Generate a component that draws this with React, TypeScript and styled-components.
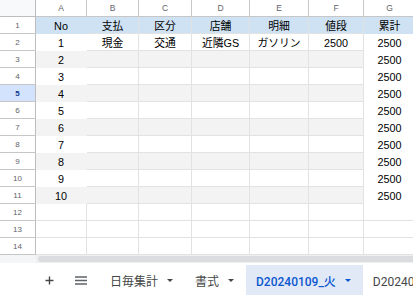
import styled, { createGlobalStyle } from "styled-components";

const GlobalStyle = createGlobalStyle`
  body {
    margin: 0;
    background: #ffffff;
  }
`;

const COLUMNS = ["A", "B", "C", "D", "E", "F", "G"];
const HEADERS = ["No", "支払", "区分", "店舗", "明細", "値段", "累計"];
const FIRST_ROW = ["1", "現金", "交通", "近隣GS", "ガソリン", "2500", "2500"];
const ACTIVE_ROW = 5;
const ROW_COUNT = 14;

type Fill = "none" | "header" | "band" | "white";

function buildRow(row: number): string[] {
  if (row === 1) return HEADERS;
  if (row === 2) return FIRST_ROW;
  if (row <= 11) return [String(row - 1), "", "", "", "", "", "2500"];
  return ["", "", "", "", "", "", ""];
}

function fillFor(row: number, col: number): Fill {
  if (row === 1) return "header";
  if (row > 11) return "none";
  if (col === 6) return "white";
  return row % 2 === 1 ? "band" : "white";
}

export default function App(): JSX.Element {
  const rows = Array.from({ length: ROW_COUNT }, (_, i) => i + 1);

  return (
    <Page>
      <GlobalStyle />
      <Sheet>
        <Corner />
        {COLUMNS.map((c) => (
          <ColHeader key={c}>{c}</ColHeader>
        ))}
        {rows.map((r) => (
          <Row key={r} row={r} />
        ))}
      </Sheet>
      <ScrollStrip>
        <ScrollCorner />
        <ScrollThumb />
      </ScrollStrip>
      <TabBar>
        <IconButton aria-label="シートを追加">
          <svg width="9" height="9" viewBox="0 0 9 9">
            <path d="M4.5 0.5v8M0.5 4.5h8" stroke="#444746" strokeWidth="1.4" />
          </svg>
        </IconButton>
        <IconButton aria-label="すべてのシート">
          <svg width="12" height="9" viewBox="0 0 12 9">
            <path d="M0 1h12M0 4.5h12M0 8h12" stroke="#5f6368" strokeWidth="1.5" />
          </svg>
        </IconButton>
        <Tab>
          日毎集計
          <Caret />
        </Tab>
        <Tab>
          書式
          <Caret />
        </Tab>
        <Tab $active>
          D20240109_火
          <Caret $active />
        </Tab>
        <Tab>D20240110_水</Tab>
      </TabBar>
    </Page>
  );
}

function Row({ row }: { row: number }): JSX.Element {
  const values = buildRow(row);
  return (
    <>
      <RowHeader $active={row === ACTIVE_ROW}>{row}</RowHeader>
      {values.map((v, col) => {
        const fill = fillFor(row, col);
        const plain = row <= 11 && (col === 0 || col === 6);
        return (
          <Cell key={col} $fill={fill} $plain={plain}>
            {v}
          </Cell>
        );
      })}
    </>
  );
}

const Page = styled.div`
  width: 413px;
  height: 295px;
  overflow: hidden;
  display: flex;
  flex-direction: column;
  font-family: "Liberation Sans", Arial, "Noto Sans CJK JP", sans-serif;
`;

const Sheet = styled.div`
  flex: none;
  display: grid;
  grid-template-columns: 36px 51px 52px 53px 58px 59px 55px 52px;
  grid-auto-rows: 17px;
  height: 255px;
  overflow: hidden;
`;

const Corner = styled.div`
  box-sizing: border-box;
  background: #f8f9fa;
  border-right: 1px solid #bdbdbd;
  border-bottom: 1px solid #bdbdbd;
`;

const ColHeader = styled.div`
  box-sizing: border-box;
  display: flex;
  align-items: center;
  justify-content: center;
  background: #ffffff;
  border-right: 1px solid #c7c7c7;
  border-bottom: 1px solid #c7c7c7;
  color: #5f6368;
  font-size: 8.5px;
`;

const RowHeader = styled.div<{ $active?: boolean }>`
  box-sizing: border-box;
  display: flex;
  align-items: center;
  justify-content: center;
  background: ${(p) => (p.$active ? "#d3e3fd" : "#ffffff")};
  border-right: 1px solid #bdbdbd;
  border-bottom: 1px solid #c7c7c7;
  color: ${(p) => (p.$active ? "#0b3a8c" : "#5f6368")};
  font-size: 8px;
  font-weight: ${(p) => (p.$active ? 700 : 400)};
`;

const FILLS: Record<Fill, string> = {
  none: "#ffffff",
  header: "#cfe2f3",
  band: "#f3f3f3",
  white: "#ffffff",
};

const Cell = styled.div<{ $fill: Fill; $plain: boolean }>`
  box-sizing: border-box;
  display: flex;
  align-items: flex-end;
  justify-content: center;
  padding-bottom: 0;
  background: ${(p) => FILLS[p.$fill]};
  border-right: 1px solid ${(p) => (p.$plain ? "transparent" : "#e2e2e3")};
  border-bottom: 1px solid ${(p) => (p.$plain ? "transparent" : "#e2e2e3")};
  color: #000000;
  font-size: 10.8px;
  line-height: 13px;
  white-space: nowrap;
  overflow: hidden;
`;

const ScrollStrip = styled.div`
  flex: none;
  display: flex;
  height: 8px;
  background: #eeeff1;
`;

const ScrollCorner = styled.div`
  width: 36px;
  background: #f4f5f6;
`;

const ScrollThumb = styled.div`
  flex: 1;
  margin: 1px 0 1px 2px;
  background: #dadce0;
  border-radius: 4px 0 0 4px;
`;

const TabBar = styled.div`
  flex: 1;
  display: flex;
  align-items: stretch;
  padding: 2px 0 0 36px;
  background: #ffffff;
  font-family: Roboto, "Noto Sans CJK JP", sans-serif;
  font-size: 12px;
  overflow: hidden;
`;

const IconButton = styled.div`
  flex: none;
  width: 26px;
  margin-right: 6px;
  display: flex;
  align-items: center;
  justify-content: center;
`;

const Tab = styled.div<{ $active?: boolean }>`
  flex: none;
  display: flex;
  align-items: center;
  gap: 9px;
  padding: 0 12px 0 10px;
  white-space: nowrap;
  background: ${(p) => (p.$active ? "#e1e9f7" : "transparent")};
  color: ${(p) => (p.$active ? "#0b57d0" : "#444746")};
  font-weight: ${(p) => (p.$active ? 500 : 400)};
  &:first-of-type {
    margin-left: 3px;
  }
`;

const Caret = styled.span<{ $active?: boolean }>`
  width: 0;
  height: 0;
  border-left: 3px solid transparent;
  border-right: 3px solid transparent;
  border-top: 3px solid ${(p) => (p.$active ? "#0b57d0" : "#444746")};
`;
